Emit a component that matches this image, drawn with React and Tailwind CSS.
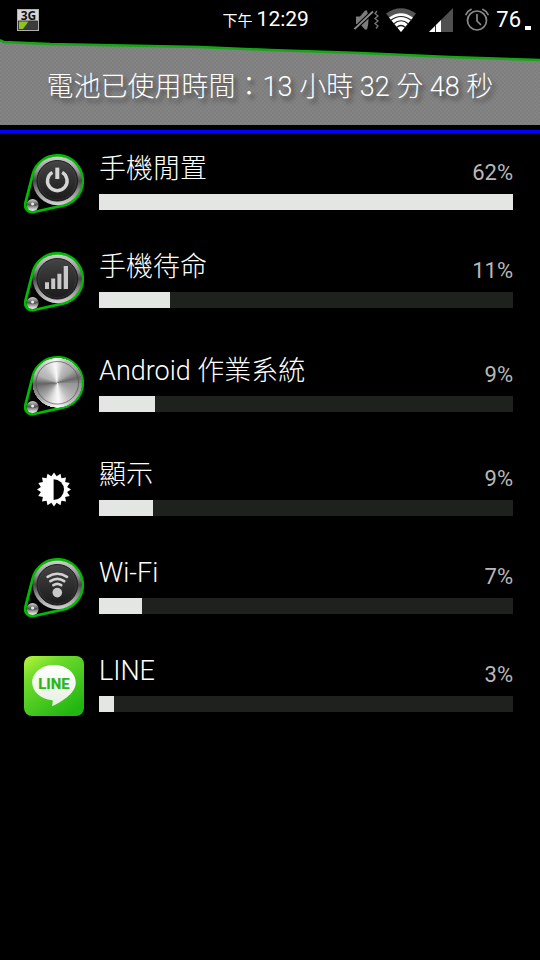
import React, { useId } from 'react';

const usage = [
    { id: 'idle', name: '手機閒置', percent: 62, fill: 100, icon: 'power' },
    { id: 'standby', name: '手機待命', percent: 11, fill: 17.2, icon: 'signal' },
    { id: 'os', name: 'Android 作業系統', percent: 9, fill: 13.5, icon: 'metal', tall: true },
    { id: 'screen', name: '顯示', percent: 9, fill: 13.1, icon: 'brightness', tall: true },
    { id: 'wifi', name: 'Wi-Fi', percent: 7, fill: 10.4, icon: 'wifi' },
    { id: 'line', name: 'LINE', percent: 3, fill: 3.6, icon: 'line' },
];

// Brushed metal shades: [angle, grey level], clockwise from the right
const metalStops = [
    [0, 150], [22, 165], [55, 195], [85, 250], [105, 225], [135, 165], [160, 130],
    [175, 100], [200, 180], [225, 195], [262, 250], [290, 190], [320, 165], [345, 105], [360, 150],
];

const metalShade = (angle) => {
    const i = Math.max(1, metalStops.findIndex(([a]) => a >= angle));
    const [a0, s0] = metalStops[i - 1];
    const [a1, s1] = metalStops[i];
    const v = Math.round(s0 + ((s1 - s0) * (angle - a0)) / (a1 - a0));
    return `rgb(${v},${v},${v})`;
};

const MetalDisc = ({ cx, cy, r }) => {
    const step = 4;
    const point = (deg) => {
        const t = (deg * Math.PI) / 180;
        return `${(cx + r * Math.cos(t)).toFixed(2)} ${(cy + r * Math.sin(t)).toFixed(2)}`;
    };
    const wedges = Array.from({ length: 360 / step }, (_, i) => i * step);
    // Each wedge runs on under the next ones so that no seam shows
    return (
        <g>
            <circle cx={cx} cy={cy} r={r} fill="#999" />
            {wedges.map(a => (
                <path
                    key={a}
                    d={`M${cx} ${cy}L${point(a)}A${r} ${r} 0 0 1 ${point(Math.min(360, a + 60))}Z`}
                    fill={metalShade(a)}
                />
            ))}
        </g>
    );
};

const KnobGlyph = ({ type }) => {
    if (type === 'power') {
        return (
            <g fill="none" stroke="#d6d6d6">
                <path d="M28.4 18.4A9.8 9.8 0 1 0 38.2 18.4" strokeWidth="3.4" />
                <path d="M33.3 13.6V25" strokeWidth="4" />
            </g>
        );
    }
    if (type === 'signal') {
        return <path d="M21 30.3h4v6.7h-4zM27.200 26.500h4v10.500h-4zM33.400 21.700h4v15.300h-4zM39.700 14h4.300v23h-4.300z" fill="#c8c8c8" />;
    }
    return (
        <g fill="none" stroke="#d2d2d2" strokeWidth="2.6" strokeLinecap="round">
            <path d="M23.6 18.8Q33.3 12.8 43 18.8" />
            <path d="M26.4 23.2Q33.3 18.6 40.2 23.2" />
            <path d="M29.4 27.2Q33.3 24.6 37.2 27.2" />
            <circle cx="33.3" cy="34.6" r="4.8" fill="#c8c8c8" stroke="none" />
        </g>
    );
};

const KnobIcon = ({ type }) => {
    const id = useId();
    return (
        <svg viewBox="0 0 60 60" className="size-full" aria-hidden="true">
            <defs>
                <linearGradient id={`${id}rim`} x1="0" y1="0" x2="0" y2="1">
                    <stop offset="0" stopColor="#d0d0d0" />
                    <stop offset="0.3" stopColor="#959595" />
                    <stop offset="0.5" stopColor="#484848" />
                    <stop offset="0.7" stopColor="#8a8a8a" />
                    <stop offset="1" stopColor="#d4d4d4" />
                </linearGradient>
                <linearGradient id={`${id}face`} x1="0" y1="0" x2="0" y2="1">
                    <stop offset="0" stopColor="#444" />
                    <stop offset="1" stopColor="#1a1a1a" />
                </linearGradient>
                <linearGradient id={`${id}ball`} x1="0" y1="0" x2="0" y2="1">
                    <stop offset="0" stopColor="#d0d0d0" />
                    <stop offset="0.45" stopColor="#5c5c5c" />
                    <stop offset="1" stopColor="#fafafa" />
                </linearGradient>
            </defs>
            <path
                d="M1.400 49.200L8.700 20.500A25.400 25.400 0 1 1 38.800 51.600L9.900 58A7.200 7.200 0 0 1 1.400 49.200Z"
                fill="#050505"
                stroke="#00bc00"
                strokeWidth="2.800"
            />
            {type === 'metal' ? (
                <>
                    <MetalDisc cx={33.3} cy={26.8} r={24.4} />
                    <circle cx="33.3" cy="26.8" r="21.3" fill="none" stroke="#4a4a4a" strokeOpacity="0.65" strokeWidth="1" />
                </>
            ) : (
                <>
                    <circle cx="33.3" cy="26.8" r="24.4" fill={`url(#${id}rim)`} />
                    <circle cx="33.3" cy="26.8" r="20.3" fill={`url(#${id}face)`} stroke="#1c1c1c" strokeWidth="1" />
                    <circle cx="33.3" cy="26.8" r="18.8" fill="none" stroke="#555" strokeOpacity="0.5" strokeWidth="0.6" />
                    <KnobGlyph type={type} />
                </>
            )}
            <circle cx="8.6" cy="51" r="6" fill={`url(#${id}ball)`} />
            <path d="M3.600 50Q8.600 53.500 13.600 50" fill="none" stroke="#555" strokeWidth="1" />
            <circle cx="8.6" cy="50" r="1.600" fill="#e8e8e8" />
        </svg>
    );
};

const BrightnessIcon = () => {
    const points = Array.from({ length: 32 }, (_, i) => {
        const r = i % 2 ? 13.4 : 17;
        const t = (i * Math.PI) / 16;
        return `${(30 + r * Math.sin(t)).toFixed(2)},${(29.5 - r * Math.cos(t)).toFixed(2)}`;
    }).join(' ');
    return (
        <svg viewBox="0 0 60 60" className="size-full" aria-hidden="true">
            <polygon points={points} fill="#fff" />
            <path d="M29.6 19.2A10.4 10.4 0 0 1 29.6 40z" fill="#000" />
        </svg>
    );
};

const LineIcon = () => (
    <svg viewBox="0 0 60 60" className="size-full" aria-hidden="true">
        <defs>
            <linearGradient id="lineBg" x1="0" y1="0" x2="0.7" y2="1">
                <stop offset="0" stopColor="#b9f53c" />
                <stop offset="0.3" stopColor="#6fdc2c" />
                <stop offset="1" stopColor="#22b612" />
            </linearGradient>
            <linearGradient id="lineBubble" x1="0" y1="0" x2="0" y2="1">
                <stop offset="0" stopColor="#fff" />
                <stop offset="1" stopColor="#e6efe2" />
            </linearGradient>
        </defs>
        <rect width="60" height="60" rx="8" fill="url(#lineBg)" />
        <path
            d="M30 9C17.900 9 8.200 16.700 8.200 26.600C8.200 35.600 16.600 43.200 28 44.200C29.200 44.400 28.800 46 28.100 50.200C35.500 47 51.800 38 51.800 26.600C51.800 16.700 42.100 9 30 9Z"
            fill="url(#lineBubble)"
        />
        <text x="30" y="32.500" textAnchor="middle" fontFamily="Roboto, sans-serif" fontWeight="800" fontSize="15" fill="#2fb51a">
            LINE
        </text>
    </svg>
);

const RowIcon = ({ type }) => {
    if (type === 'brightness') return <BrightnessIcon />;
    if (type === 'line') return <LineIcon />;
    return <KnobIcon type={type} />;
};

const NetworkIcon = () => (
    <svg viewBox="0 0 22 22" className="size-[22px] overflow-visible" aria-hidden="true">
        <rect x="0.500" y="0.500" width="21" height="21" fill="#d6d6d6" stroke="#b0b0b0" />
        <rect x="1.500" y="12" width="19" height="8.500" fill="#3c3c3c" stroke="#222" strokeWidth="0.800" />
        <path d="M2 12.500h9.500l-5.500 7.500H2z" fill="#8fc31f" />
        <text x="11.500" y="10.500" textAnchor="middle" fontFamily="Open Sans, sans-serif" fontWeight="700" fontSize="12" fill="#111">3G</text>
    </svg>
);

const StatusIcons = () => (
    <div className="flex items-center">
        {/* Silent with vibration */}
        <svg viewBox="0 0 26 24" className="h-6 w-[26px]" fill="none" aria-hidden="true">
            <path d="M2 8.500h4l5-6h2q3 9.500 0 19H11L6 16H2z" fill="#7c7c7c" />
            <path d="M0.500 21L19 3.500" stroke="#000" strokeWidth="4" />
            <path d="M0.500 21L19 3.500" stroke="#8c8c8c" strokeWidth="1.800" />
            <path d="M23 3l-2 2.500 3 2.500-3 2.500 3 2.500-3 2.500 3 2.500-2 2.500" stroke="#777" strokeWidth="1.300" />
        </svg>
        {/* Wi-Fi */}
        <svg viewBox="0 0 30 24" className="ml-[6px] h-6 w-[30px]" fill="none" aria-hidden="true">
            <path d="M0 5.500Q15-5 30 5.500L15 24z" fill="#555" />
            <path d="M3 9.500Q15 1 27 9.500L15 24z" fill="#fff" />
            <path d="M4.500 12.500Q15 4.500 25.500 12.500M7.500 16Q15 9.500 22.500 16M10.500 19.500Q15 15.500 19.500 19.500" stroke="#222" strokeWidth="1.200" />
        </svg>
        {/* Mobile signal */}
        <svg viewBox="0 0 24 24" className="ml-[13px] size-6" aria-hidden="true">
            <path d="M0 24L24 0v24z" fill="#505050" />
            <path d="M0 24L12 12v12z" fill="#fff" />
            <path d="M6.500 17v7" stroke="#333" strokeWidth="1" />
        </svg>
        {/* Alarm */}
        <svg viewBox="0 0 24 24" className="ml-3 size-6" fill="none" stroke="#8a8a8a" strokeLinecap="round" aria-hidden="true">
            <circle cx="12" cy="12.500" r="9.500" strokeWidth="1.700" />
            <path d="M12 6.500v6.500l3.500 3.500" strokeWidth="1.700" />
            <path d="M1 6.500Q2.500 3 6 1.500M23 6.500Q21.500 3 18 1.500" strokeWidth="1.800" />
        </svg>
    </div>
);

const StatusBar = () => (
    <div className="grid h-10 grid-cols-[2fr_3fr] items-center pr-[9px] pl-[17px] text-white">
        <NetworkIcon />
        <div className="flex items-center justify-between">
            <div className="flex items-baseline gap-1">
                <span className="text-[15px] leading-6">下午</span>
                <time className="text-[21px] leading-6">12:29</time>
            </div>
            <div className="flex items-center">
                <StatusIcons />
                <span className="ml-[7px] text-[22px] leading-6">76</span>
                <span className="ml-1 mt-4 h-1 w-1.5 bg-white" />
            </div>
        </div>
    </div>
);

// Battery level history behind the time on battery
const BatteryHistory = () => (
    <header className="grid">
        <svg viewBox="0 0 540 85" preserveAspectRatio="none" className="col-start-1 row-start-1 h-[85px] w-full overflow-visible" aria-hidden="true">
            <defs>
                <pattern id="dither" width="4" height="4" patternUnits="userSpaceOnUse">
                    <rect width="4" height="4" fill="#848484" />
                    <path d="M0 0h2v2H0zM2 2h2v2H2z" fill="#7e7e7e" />
                </pattern>
            </defs>
            <path d="M0 0L4 2L50 4L100 5L200 7L270 10L360 13L450 17L540 20V85H0Z" fill="url(#dither)" />
            <path d="M0 0L4 2L50 4L100 5L200 7L270 10L360 13L450 17L540 20" fill="none" stroke="#16a716" strokeWidth="2.500" />
        </svg>
        <h1 className="col-start-1 row-start-1 self-center pt-2 text-center text-[27px] leading-8 font-light text-white [text-shadow:3px_4px_4px_rgba(0,0,0,0.5)]">
            電池已使用時間：13 小時 32 分 48 秒
        </h1>
    </header>
);

const UsageRow = ({ item }) => (
    <li className={`flex gap-[15px] pb-[19px] ${item.tall ? 'pt-[25px]' : 'pt-[19px]'}`}>
        <div className="size-[60px] shrink-0">
            <RowIcon type={item.icon} />
        </div>
        <div className="min-w-0 flex-1">
            <div className="flex h-10 items-start justify-between">
                <h2 id={item.id} className="text-[27px] leading-[30px] font-light text-white">{item.name}</h2>
                <span className="pt-[7px] text-[22px] leading-6 text-[#b8b8b8]">{item.percent}%</span>
            </div>
            <div
                role="progressbar"
                aria-labelledby={item.id}
                aria-valuenow={item.percent}
                className="h-4 bg-[#1f211f]"
            >
                <div className="h-full bg-[#e4e6e3]" style={{ width: `${item.fill}%` }} />
            </div>
        </div>
    </li>
);

const App = () => {
    return (
        <div className="min-h-screen bg-black font-['Roboto','Noto_Sans_CJK_TC',sans-serif]" lang="zh-Hant">
            <StatusBar />
            <BatteryHistory />
            <div className="mt-[5px] h-[3px] bg-[#0000ff]" />
            <ul className="pt-[2px] pr-[27px] pl-6">
                {usage.map(item => (
                    <UsageRow key={item.id} item={item} />
                ))}
            </ul>
        </div>
    );
};

export default App;
